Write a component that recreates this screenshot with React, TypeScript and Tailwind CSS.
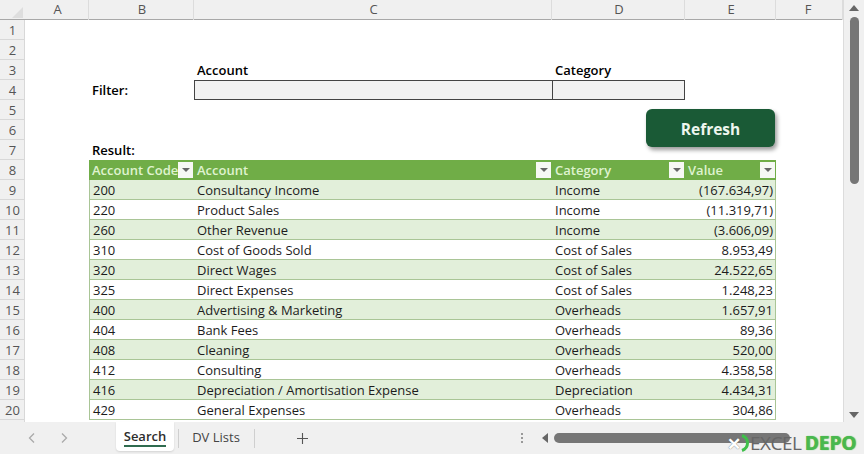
import React from 'react';

const ROWS = [
  ['200', 'Consultancy Income', 'Income', '(167.634,97)'],
  ['220', 'Product Sales', 'Income', '(11.319,71)'],
  ['260', 'Other Revenue', 'Income', '(3.606,09)'],
  ['310', 'Cost of Goods Sold', 'Cost of Sales', '8.953,49'],
  ['320', 'Direct Wages', 'Cost of Sales', '24.522,65'],
  ['325', 'Direct Expenses', 'Cost of Sales', '1.248,23'],
  ['400', 'Advertising & Marketing', 'Overheads', '1.657,91'],
  ['404', 'Bank Fees', 'Overheads', '89,36'],
  ['408', 'Cleaning', 'Overheads', '520,00'],
  ['412', 'Consulting', 'Overheads', '4.358,58'],
  ['416', 'Depreciation / Amortisation Expense', 'Depreciation', '4.434,31'],
  ['429', 'General Expenses', 'Overheads', '304,86'],
];

const GRID = 'grid grid-cols-[25px_64px_105px_358px_133px_91px_67px] grid-rows-[20px] h-5 shrink-0';

const RowNum: React.FC<{ n: number }> = ({ n }) => (
  <div className="flex items-center justify-center bg-[#f0f0f0] border-r border-b border-[#d8d8d8] text-[#555] text-[13px] leading-none pt-[2px] pl-[1px]">{n}</div>
);

const FilterBtn: React.FC = () => (
  <span className="absolute right-[1px] top-[2px] w-[15px] h-4 bg-[#f6f8f4] flex items-center justify-center">
    <span className="w-0 h-0 border-x-[4px] border-x-transparent border-t-[4px] border-t-[#666]" />
  </span>
);

const HeadCell: React.FC<{ label: string }> = ({ label }) => (
  <div className="relative bg-[#70ad47] text-[#dff3cf] font-semibold pl-[3px] leading-5 overflow-hidden whitespace-nowrap">
    {label}
    <FilterBtn />
  </div>
);

const App: React.FC = () => {
  const plain = (n: number, children?: React.ReactNode) => (
    <div key={n} className={GRID}>
      <RowNum n={n} />
      {children}
    </div>
  );

  return (
    <div className="relative w-[864px] h-[454px] overflow-hidden bg-[#f0f0f0] flex flex-col text-[13px] text-[#1c1c1c] font-['Open_Sans','Noto_Sans',sans-serif]">
      <div className="flex flex-1 min-h-0">
        <div className="w-[843px] flex flex-col overflow-hidden relative bg-white">
          {/* Column letters */}
          <div className="grid grid-cols-[25px_64px_105px_358px_133px_91px_67px] h-5 shrink-0 bg-[#f0f0f0] border-b border-[#a8a8a8] text-[#555] text-[13px]">
            <div className="flex items-end justify-end pr-[2px] pb-[2px]">
              <span className="w-0 h-0 border-l-[11px] border-l-transparent border-b-[11px] border-b-[#dedede]" />
            </div>
            {['A', 'B', 'C', 'D', 'E'].map((c) => (
              <div key={c} className="flex items-center justify-center border-r border-[#dcdcdc] pl-[2px]">{c}</div>
            ))}
            <div className="flex items-center justify-center border-r border-[#dcdcdc] pr-[2px]">F</div>
          </div>

          {plain(1)}
          {plain(2)}
          {plain(3, <>
            <div />
            <div />
            <div className="pl-[3px] font-semibold leading-5 text-black">Account</div>
            <div className="pl-[3px] font-semibold leading-5 text-black">Category</div>
          </>)}
          {plain(4, <>
            <div />
            <div className="pl-[3px] font-semibold leading-5 text-black">Filter:</div>
            <div className="bg-[#f2f2f2] border border-[#444] border-r-0" />
            <div className="bg-[#f2f2f2] border border-[#444]" />
          </>)}
          {plain(5)}
          {plain(6)}
          {plain(7, <>
            <div />
            <div className="pl-[3px] font-semibold leading-5 text-black">Result:</div>
          </>)}
          {plain(8, <>
            <div />
            <HeadCell label="Account Code" />
            <HeadCell label="Account" />
            <HeadCell label="Category" />
            <HeadCell label="Value" />
          </>)}
          {ROWS.map((r, i) => {
            const bg = i % 2 === 0 ? 'bg-[#e2efda]' : 'bg-white';
            const cell = `${bg} border-b border-[#a9c596] pl-[3px] pt-[2px] leading-[17px] whitespace-nowrap`;
            return plain(9 + i, <>
              <div />
              <div className={`${cell} border-l`}>{r[0]}</div>
              <div className={cell}>{r[1]}</div>
              <div className={cell}>{r[2]}</div>
              <div className={`${cell} border-r text-right pr-[2px]`}>{r[3]}</div>
            </>);
          })}
          <div className={GRID}>
            <div className="bg-[#f0f0f0] border-r border-[#d8d8d8]" />
          </div>

          {/* Refresh button sits over the sheet */}
          <button className="absolute left-[646px] top-[109px] w-[129px] h-[38px] pt-[3px] rounded-[6px] bg-[#1a5a36] text-[#eef6ee] font-bold text-[15.5px] shadow-[2px_3px_4px_rgba(0,0,0,0.4)]">
            Refresh
          </button>
        </div>

        {/* Vertical scrollbar */}
        <div className="w-[21px] bg-[#f0f0f0] border-l border-[#dcdcdc] flex flex-col items-center pt-[5px] pb-[4px]">
          <span className="w-0 h-0 border-x-[5px] border-x-transparent border-b-[6px] border-b-[#666]" />
          <div className="w-[9px] h-[167px] mt-[6px] rounded-full bg-[#767676]" />
          <div className="flex-1" />
          <span className="w-0 h-0 border-x-[5px] border-x-transparent border-t-[6px] border-t-[#666]" />
        </div>
      </div>

      {/* Sheet tabs */}
      <div className="h-8 shrink-0 flex items-center relative text-[13px] text-[#444]">
        <svg width="10" height="12" viewBox="0 0 10 12" className="ml-[27px] text-[#aaa]" fill="none" stroke="currentColor" strokeWidth="1.3"><path d="M7 1.5 2.5 6 7 10.5" /></svg>
        <svg width="10" height="12" viewBox="0 0 10 12" className="ml-[22px] text-[#aaa]" fill="none" stroke="currentColor" strokeWidth="1.3"><path d="M3 1.5 7.5 6 3 10.5" /></svg>
        <div className="ml-[47px] mb-[3px] h-[29px] w-[58px] bg-white rounded-b-[4px] shadow-[0_1px_2px_rgba(0,0,0,0.12)] flex flex-col items-center justify-center font-semibold text-[#2d2d2d]">
          <span className="leading-[18px] border-b-2 border-[#2f6b4f]">Search</span>
        </div>
        <div className="ml-[4px] w-px h-[19px] bg-[#cfcfcf]" />
        <div className="w-[75px] text-center pr-[1px]">DV Lists</div>
        <div className="w-px h-[19px] bg-[#cfcfcf]" />
        <svg width="13" height="13" viewBox="0 0 13 13" className="ml-[41px] text-[#555]" stroke="currentColor" strokeWidth="1.1"><path d="M6.5 1v11M1 6.5h11" /></svg>
        <div className="ml-[212px] flex flex-col gap-[2px]">
          <span className="w-[2px] h-[2px] bg-[#999]" />
          <span className="w-[2px] h-[2px] bg-[#999]" />
          <span className="w-[2px] h-[2px] bg-[#999]" />
        </div>
        <span className="ml-[19px] w-0 h-0 border-y-[5px] border-y-transparent border-r-[6px] border-r-[#666]" />
        <div className="ml-[6px] w-[236px] h-[10px] rounded-full bg-[#767676]" />

        {/* Watermark over the corner */}
        <div className="absolute left-[727px] top-[11px] h-[20px] flex items-center whitespace-nowrap">
          <span className="text-white text-[17px] font-bold leading-none [text-shadow:0_0_1px_#555]">✕</span>
          <svg width="8" height="18" viewBox="0 0 8 18" fill="none" stroke="#3fbf4a" strokeWidth="3"><path d="M1 1.5c4 1.5 5.5 4.5 5.5 7.5S5 15 1 16.5" /></svg>
          <span className="text-[#666] text-[19px] leading-none tracking-[-0.5px] ml-[1px] mr-[3px]">EXCEL</span>
          <span className="text-[#49b84f] text-[19px] leading-none font-bold [text-shadow:1px_0_1px_#49b84f]">DEPO</span>
        </div>
      </div>
    </div>
  );
};

export default App;
